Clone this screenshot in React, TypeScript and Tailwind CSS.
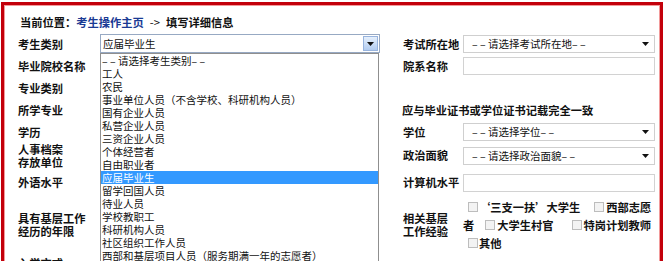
import React from "react";

const Cb = ({ className = "" }: { className?: string }) => (
  <span className={`inline-block w-[10px] h-[10px] shrink-0 border border-[#bdbdbd] bg-[#f3f3f3] ${className}`} />
);

const Arrow = () => (
  <svg width="7" height="4" viewBox="0 0 7 4" className="ml-auto shrink-0">
    <path d="M0 0h7L3.5 4z" fill="#111" />
  </svg>
);

// dashes in the old page render short and spaced out
const Dash = () => <span className="inline-block w-[14px] whitespace-pre">– –</span>;

const Select = ({ text }: { text: string }) => (
  <div className="flex items-center">
    <div className="w-[192px] h-[18px] border border-[#cfcfcf] flex items-center pl-[8px] pr-[5px] font-normal text-[10.5px] whitespace-nowrap">
      <span>
        <Dash />
        <span className="ml-[2px]">{text}</span>
        <Dash />
      </span>
      <Arrow />
    </div>
  </div>
);

const Input = () => (
  <div className="flex items-center">
    <div className="w-[192px] h-[18px] border border-[#d2d2d2] bg-white" />
  </div>
);

const options = [
  "工人",
  "农民",
  "事业单位人员（不含学校、科研机构人员）",
  "国有企业人员",
  "私营企业人员",
  "三资企业人员",
  "个体经营者",
  "自由职业者",
  "应届毕业生",
  "留学回国人员",
  "待业人员",
  "学校教职工",
  "科研机构人员",
  "社区组织工作人员",
  "西部和基层项目人员（服务期满一年的志愿者）",
];

export default function App() {
  return (
    <div className="w-[669px] h-[261px] overflow-hidden bg-white text-[#111] font-['Noto_Sans_CJK_SC','Noto_Sans',sans-serif]">
      <div className="ml-px mt-[2px] w-[662px] h-[300px] border-[3px] border-[#c3000b] shadow-[inset_0_0_0_1px_#f29a9a]">
        {/* breadcrumb */}
        <div className="h-[28px] pt-[9px] pl-[16px] text-[11.25px] leading-[16px] font-bold whitespace-nowrap">
          当前位置：<span className="text-[#1a3a94]">考生操作主页</span>
          <span className="ml-[6px] mr-[6px] font-normal">-&gt;</span>填写详细信息
        </div>

        <div className="grid grid-cols-[82px_303px_60px_192px] grid-rows-[22px_22px_22px_22px_22px_25px_29px_55px_22px] pl-[14px] text-[11.25px] font-bold whitespace-nowrap">
          {/* row 1 */}
          <div className="flex items-center">考生类别</div>
          <div className="relative z-10 pt-px">
            <div className="w-[280px] h-[19px] border border-[#97a9c3] flex items-center pl-[2px] font-normal text-[10.5px] bg-white">
              <span>应届毕业生</span>
              <div className="ml-auto mr-px w-[15px] h-[15px] border border-[#98b4de] bg-linear-to-b from-[#e6f0fc] to-[#b2ccf0] flex items-center justify-center">
                <svg width="7" height="4" viewBox="0 0 7 4">
                  <path d="M0 0h7L3.5 4z" fill="#111" />
                </svg>
              </div>
            </div>
            <div className="absolute top-[20px] left-0 w-[279px] h-[220px] border border-[#8f8f8f] bg-white font-normal text-[10.5px] leading-[13px]">
              <div className="h-[13px] pl-[1px]">
                <Dash />
                <span className="ml-[2px]">请选择考生类别</span>
                <Dash />
              </div>
              {options.map((o) => (
                <div
                  key={o}
                  className={`h-[13px] pl-[1px] ${o === "应届毕业生" ? "bg-[#3399ff] text-white" : ""}`}
                >
                  {o}
                </div>
              ))}
            </div>
          </div>
          <div className="flex items-center">考试所在地</div>
          <Select text="请选择考试所在地" />

          {/* row 2 */}
          <div className="flex items-center">毕业院校名称</div>
          <div />
          <div className="flex items-center">院系名称</div>
          <Input />

          {/* row 3 */}
          <div className="flex items-center">专业类别</div>
          <div />
          <div />
          <div />

          {/* row 4 */}
          <div className="flex items-center">所学专业</div>
          <div />
          <div className="col-span-2 flex items-center -ml-px">应与毕业证书或学位证书记载完全一致</div>

          {/* row 5 */}
          <div className="flex items-center">学历</div>
          <div />
          <div className="flex items-center">学位</div>
          <Select text="请选择学位" />

          {/* row 6 */}
          <div className="flex items-center leading-[13px]">
            <div>人事档案<br />存放单位</div>
          </div>
          <div />
          <div className="flex items-center">政治面貌</div>
          <Select text="请选择政治面貌" />

          {/* row 7 */}
          <div className="flex items-center">外语水平</div>
          <div />
          <div className="flex items-center">计算机水平</div>
          <Input />

          {/* row 8 */}
          <div className="flex items-center leading-[13px]">
            <div>具有基层工作<br />经历的年限</div>
          </div>
          <div />
          <div className="flex items-center leading-[13px]">
            <div>相关基层<br />工作经验</div>
          </div>
          <div className="flex flex-col justify-center leading-[18px]">
            <div className="flex items-center">
              <Cb className="ml-[5px] mr-px" />‘三支一扶’大学生
              <Cb className="ml-[14px] mr-[2px]" />西部志愿
            </div>
            <div className="flex items-center">
              者<Cb className="ml-[11px] mr-[2px]" />大学生村官
              <Cb className="ml-[18px] mr-[2px]" />特岗计划教师
            </div>
            <div className="flex items-center">
              <Cb className="ml-[5px] mr-px" />其他
            </div>
          </div>

          {/* row 9 */}
          <div className="flex items-center">入学方式</div>
          <div />
          <div />
          <div />
        </div>
      </div>
    </div>
  );
}
